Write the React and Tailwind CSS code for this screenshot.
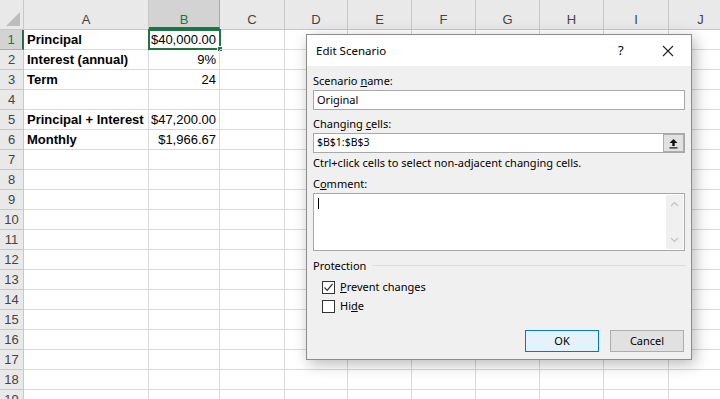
import React from "react";

const columns = [
  { key: "A", w: "w-[125px]" },
  { key: "B", w: "w-[71px]" },
  { key: "C", w: "w-[65px]" },
  { key: "D", w: "w-[63px]" },
  { key: "E", w: "w-[64px]" },
  { key: "F", w: "w-[64px]" },
  { key: "G", w: "w-[64px]" },
  { key: "H", w: "w-[64px]" },
  { key: "I", w: "w-[65px]" },
  { key: "J", w: "w-[64px]" },
];

const data = {
  1: ["Principal", "$40,000.00"],
  2: ["Interest (annual)", "9%"],
  3: ["Term", "24"],
  5: ["Principal + Interest", "$47,200.00"],
  6: ["Monthly", "$1,966.67"],
};

const rows = Array.from({ length: 19 }, (_, i) => i + 1);

const HeaderRow = () => (
  <div className="flex h-[30px] bg-[#e9e9e9] border-b border-[#c8c8c8]">
    <div className="w-[24px] shrink-0 border-r border-[#c8c8c8] flex items-end justify-end pr-[3px] pb-[3px]">
      <svg width="14" height="14" viewBox="0 0 14 14">
        <polygon points="14,0 14,14 0,14" fill="#bdbdbd" />
      </svg>
    </div>
    {columns.map((c) => (
      <div
        key={c.key}
        className={`${c.w} shrink-0 border-r flex justify-center pt-[12px] text-[13px] leading-[15px] ${
          c.key === "B"
            ? "bg-[#d3d3d3] text-[#217346] border-[#ababab] border-b-2 border-b-[#217346]"
            : "text-[#444] border-[#c8c8c8]"
        }`}
      >
        {c.key}
      </div>
    ))}
  </div>
);

const Row = ({ n }) => {
  const vals = data[n] || [];
  return (
    <div className="flex h-[20px]">
      <div
        className={`w-[24px] shrink-0 border-b flex items-center justify-center text-[13px] ${
          n === 1
            ? "bg-[#d3d3d3] text-[#217346] border-r-2 border-r-[#217346] border-b-[#ababab]"
            : "bg-[#e9e9e9] text-[#444] border-r border-[#c8c8c8] border-b-[#c8c8c8]"
        }`}
      >
        {n}
      </div>
      {columns.map((c, i) => (
        <div
          key={c.key}
          className={`${c.w} shrink-0 border-r border-b border-[#d9d9d9] flex items-center text-[13px] text-black relative ${
            i === 0 ? "font-bold pl-[3px]" : "justify-end pr-[3px]"
          }`}
        >
          {i === 0 && vals[0]}
          {i === 1 && vals[1]}
          {i === 1 && n === 1 && (
            <div className="absolute -left-px -top-px right-[-2px] bottom-[-1px] border-2 border-[#217346]">
              <div className="absolute right-[-4px] bottom-[-4px] w-[6px] h-[6px] bg-[#217346] border border-white" />
            </div>
          )}
        </div>
      ))}
    </div>
  );
};

const Checkbox = ({ checked, children }) => (
  <div className="flex items-center h-[16px] gap-[5px]">
    <div className="w-[13px] h-[13px] border border-[#333] bg-white flex items-center justify-center">
      {checked && (
        <svg width="11" height="11" viewBox="0 0 11 11">
          <polyline points="1.5,5.5 4.2,8.3 9.5,2" fill="none" stroke="#333" strokeWidth="1.2" />
        </svg>
      )}
    </div>
    <span>{children}</span>
  </div>
);

const EditScenario = () => (
  <div className="absolute left-[306px] top-[34px] w-[386px] h-[326px] border border-[#8c8c8c] bg-[#f0f0f0] shadow-[3px_4px_14px_rgba(0,0,0,0.28)] text-[11px] text-black font-['Noto_Sans',sans-serif]">
    <div className="h-[31px] bg-white flex items-center pl-[9px]">
      <span className="flex-1 text-[11.5px]">Edit Scenario</span>
      <span className="w-[14px] text-[13px] mr-[30px]">?</span>
      <svg width="12" height="12" viewBox="0 0 12 12" className="mr-[17px]">
        <path d="M1 1 L11 11 M11 1 L1 11" stroke="#222" strokeWidth="1.1" />
      </svg>
    </div>
    <div className="px-[6px] pt-[7px] flex flex-col">
      <div className="h-[15px] leading-[15px]">
        Scenario <span className="underline">n</span>ame:
      </div>
      <div className="mt-[2px] h-[20px] bg-white border border-[#a8a8a8] flex items-center pl-[3px]">Original</div>
      <div className="mt-[6px] h-[15px] leading-[15px]">
        Changing <span className="underline">c</span>ells:
      </div>
      <div className="mt-[2px] h-[20px] bg-white border border-[#a8a8a8] flex items-center pl-[3px] text-[10.5px]">
        <span className="flex-1">$B$1:$B$3</span>
        <div className="w-[21px] h-[18px] bg-[#e1e1e1] border border-[#adadad] flex items-center justify-center">
          <svg width="11" height="11" viewBox="0 0 11 11">
            <path d="M5.5 1 L1.5 5 H4.3 V8 H6.7 V5 H9.5 Z" fill="#111" />
            <rect x="1.5" y="9.3" width="8" height="1.2" fill="#111" />
          </svg>
        </div>
      </div>
      <div className="mt-[2px] h-[15px] leading-[15px]">Ctrl+click cells to select non-adjacent changing cells.</div>
      <div className="mt-[6px] h-[15px] leading-[15px]">
        C<span className="underline">o</span>mment:
      </div>
      <div className="mt-[2px] h-[58px] bg-white border border-[#a8a8a8] flex">
        <div className="flex-1 pl-[4px] pt-[4px]">
          <div className="w-px h-[11px] bg-black" />
        </div>
        <div className="w-[17px] my-[1px] mr-[1px] bg-[#f0f0f0] flex flex-col items-center justify-between py-[6px]">
          <svg width="9" height="6" viewBox="0 0 9 6">
            <polyline points="1,5 4.5,1.5 8,5" fill="none" stroke="#c2c2c2" strokeWidth="1.2" />
          </svg>
          <svg width="9" height="6" viewBox="0 0 9 6">
            <polyline points="1,1 4.5,4.5 8,1" fill="none" stroke="#c2c2c2" strokeWidth="1.2" />
          </svg>
        </div>
      </div>
      <div className="mt-[7px] h-[15px] leading-[15px] flex items-center gap-[6px]">
        <span>Protection</span>
        <div className="flex-1 h-px bg-[#dcdcdc]" />
      </div>
      <div className="mt-[6px] pl-[9px] flex flex-col gap-[3px]">
        <Checkbox checked>
          <span className="underline">P</span>revent changes
        </Checkbox>
        <Checkbox>
          Hi<span className="underline">d</span>e
        </Checkbox>
      </div>
      <div className="mt-[16px] flex justify-end gap-[11px] pr-[1px]">
        <button className="w-[74px] h-[22px] bg-[#e5f1fb] border border-[#0078d7]">OK</button>
        <button className="w-[74px] h-[22px] bg-[#e1e1e1] border border-[#adadad]">Cancel</button>
      </div>
    </div>
  </div>
);

export default function App() {
  return (
    <div className="relative w-[720px] h-[399px] overflow-hidden bg-white font-['Liberation_Sans',sans-serif]">
      <HeaderRow />
      {rows.map((n) => (
        <Row key={n} n={n} />
      ))}
      <EditScenario />
    </div>
  );
}
